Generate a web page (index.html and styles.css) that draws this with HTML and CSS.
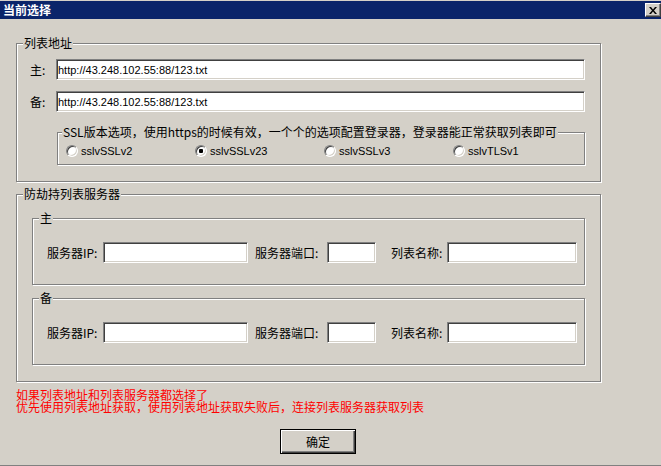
FILE: index.html
```html
<!DOCTYPE html>
<html lang="zh-CN">
<head>
    <meta charset="UTF-8">
    <title>当前选择</title>
    <link rel="stylesheet" href="styles.css">
</head>
<body>

    <div class="window">
        <div class="titlebar">
            <span class="title">当前选择</span>
            <button class="close-btn" type="button">
                <svg width="8" height="7" viewBox="0 0 8 7">
                    <path d="M0 0h2l2 2.5L6 0h2L5 3.5 8 7H6L4 4.5 2 7H0l3-3.5z" fill="#000"/>
                </svg>
            </button>
        </div>

        <div class="content">
            <fieldset class="group">
                <legend>列表地址</legend>
                <div class="url-row first">
                    <label class="url-label">主:</label>
                    <input type="text" class="text-input url-input" value="http://43.248.102.55:88/123.txt">
                </div>
                <div class="url-row">
                    <label class="url-label">备:</label>
                    <input type="text" class="text-input url-input" value="http://43.248.102.55:88/123.txt">
                </div>

                <fieldset class="group ssl-group">
                    <legend>SSL版本选项，使用https的时候有效，一个个的选项配置登录器，登录器能正常获取列表即可</legend>
                    <div class="radio-row">
                        <label class="radio-item"><input type="radio" name="ssl" class="radio">sslvSSLv2</label>
                        <label class="radio-item"><input type="radio" name="ssl" class="radio" checked>sslvSSLv23</label>
                        <label class="radio-item"><input type="radio" name="ssl" class="radio">sslvSSLv3</label>
                        <label class="radio-item"><input type="radio" name="ssl" class="radio">sslvTLSv1</label>
                    </div>
                </fieldset>
            </fieldset>

            <fieldset class="group server-group">
                <legend>防劫持列表服务器</legend>

                <fieldset class="group sub-group">
                    <legend>主</legend>
                    <div class="server-row">
                        <label class="ip-label">服务器IP:</label>
                        <input type="text" class="text-input ip-input">
                        <label class="port-label">服务器端口:</label>
                        <input type="text" class="text-input port-input">
                        <label class="name-label">列表名称:</label>
                        <input type="text" class="text-input name-input">
                    </div>
                </fieldset>

                <fieldset class="group sub-group second">
                    <legend>备</legend>
                    <div class="server-row">
                        <label class="ip-label">服务器IP:</label>
                        <input type="text" class="text-input ip-input">
                        <label class="port-label">服务器端口:</label>
                        <input type="text" class="text-input port-input">
                        <label class="name-label">列表名称:</label>
                        <input type="text" class="text-input name-input">
                    </div>
                </fieldset>
            </fieldset>

            <div class="notice">
                如果列表地址和列表服务器都选择了<br>
                优先使用列表地址获取，使用列表地址获取失败后，连接列表服务器获取列表
            </div>

            <button class="ok-btn" type="button">确定</button>
        </div>
    </div>

</body>
</html>
```

FILE: styles.css
```css
* {
    box-sizing: border-box;
}
body {
    margin: 0;
    background-color: #d4d0c8;
    font-family: "Noto Sans CJK SC", sans-serif;
    font-size: 12px;
    color: #000;
}
.window {
    width: 661px;
    height: 466px;
    border-bottom: 1px solid #808080;
}
.titlebar {
    height: 19px;
    border-top: 1px solid #d4d0c8;
    background-color: #0a246a;
    display: flex;
    justify-content: space-between;
    align-items: flex-start;
    padding-left: 3px;
}
.title {
    color: #fff;
    font-weight: bold;
    line-height: 18px;
}
.close-btn {
    width: 16px;
    height: 14px;
    margin-top: 2px;
    padding: 0;
    display: flex;
    align-items: center;
    justify-content: center;
    background-color: #d4d0c8;
    border: 1px solid;
    border-color: #fff #404040 #404040 #fff;
    box-shadow: inset -1px -1px 0 #808080;
}
.content {
    padding: 17px 0 0 16px;
}

/* etched group boxes */
.group {
    width: 585px;
    margin: 0;
    padding: 0 0 16px;
    min-inline-size: 0;
    border: 1px solid #808080;
    box-shadow: inset 1px 1px 0 #fff, 1px 1px 0 #fff;
}
.group legend {
    margin-left: 6px;
    padding: 0 1px;
    line-height: 14px;
    background-color: #d4d0c8;
}
.url-row {
    display: flex;
    align-items: center;
    padding-left: 13px;
    margin-top: 11px;
}
.url-row.first {
    margin-top: 9px;
}
.url-label {
    width: 26px;
}
.text-input {
    height: 21px;
    margin: 0;
    padding: 0 1px;
    background-color: #fff;
    border: 1px solid;
    border-color: #808080 #fff #fff #808080;
    box-shadow: inset 1px 1px 0 #404040, inset -1px -1px 0 #d4d0c8;
    font-family: "Liberation Sans", Arial, sans-serif;
    font-size: 11px;
    color: #000;
    outline: none;
}
.url-input {
    width: 529px;
}

.ssl-group {
    width: 528px;
    margin: 13px 0 0 40px;
    padding-bottom: 7px;
}
.ssl-group legend {
    margin-left: 4px;
}
.radio-row {
    display: flex;
    margin-top: 5px;
    padding-left: 8px;
    height: 13px;
}
.radio-item {
    width: 129px;
    display: flex;
    align-items: center;
    gap: 3px;
    font-family: "Liberation Sans", Arial, sans-serif;
    font-size: 11px;
}
.radio {
    appearance: none;
    width: 12px;
    height: 12px;
    margin: 0;
    border-radius: 50%;
    border: 1px solid;
    border-color: #808080 #fff #fff #808080;
    box-shadow: inset 1px 1px 0 #404040, inset -1px -1px 0 #d4d0c8;
    background-color: #fff;
}
.radio:checked {
    background: radial-gradient(circle, #000 0 2px, #fff 2.5px);
}

.server-group {
    margin-top: 5px;
}
.sub-group {
    width: auto;
    margin: 10px 15px 0;
    padding-bottom: 21px;
}
.sub-group.second {
    margin-top: 6px;
}
.server-row {
    display: flex;
    align-items: center;
    margin-top: 17px;
    padding-left: 14px;
}
.ip-label {
    width: 56px;
}
.ip-input {
    width: 145px;
}
.port-label {
    width: 72px;
    margin-left: 7px;
}
.port-input {
    width: 49px;
}
.name-label {
    width: 56px;
    margin-left: 15px;
}
.name-input {
    width: 130px;
}

.notice {
    margin-top: 7px;
    color: #ff0000;
    line-height: 12px;
}
.ok-btn {
    display: block;
    width: 76px;
    height: 25px;
    margin: 16px 0 0 264px;
    padding: 0;
    background-color: #d4d0c8;
    border: 1px solid #000;
    box-shadow: inset 1px 1px 0 #fff, inset -1px -1px 0 #404040, inset -2px -2px 0 #808080;
    font-family: "Noto Sans CJK SC", sans-serif;
    font-size: 12px;
    color: #000;
}
```
